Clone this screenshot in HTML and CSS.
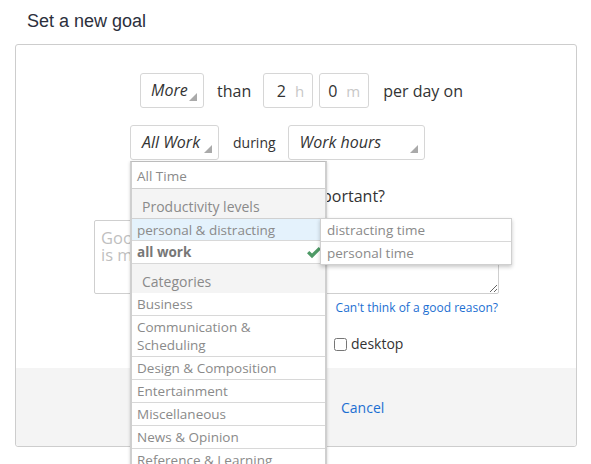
FILE: index.html
```html
<!DOCTYPE html>
<html>
<head>
<meta charset="utf-8">
<link rel="stylesheet" href="styles.css">
</head>
<body>
<h1 class="title">Set a new goal</h1>
<div class="card">
  <div class="card-body">
    <div class="row row-amount">
      <div class="select sel-more">More</div>
      <span class="word w-than">than</span>
      <div class="num"><span class="val">2</span><span class="unit">h</span></div>
      <div class="num num-m"><span class="val">0</span><span class="unit">m</span></div>
      <span class="word w-per">per day on</span>
    </div>
    <div class="row row-activity">
      <div class="select-wrap">
        <div class="select sel-work">All Work</div>
        <div class="dropdown">
          <div class="opt opt-first">All Time</div>
          <div class="group-label">Productivity levels</div>
          <div class="opt opt-hover">personal &amp; distracting</div>
          <div class="opt opt-bold">all work
            <svg class="check" width="14" height="12" viewBox="0 0 14 12"><path d="M0 6.2 L2.3 3.9 L5 6.6 L11.7 0 L14 2.3 L5 11.2 Z" fill="#4e9a66"/></svg>
          </div>
          <div class="group-label">Categories</div>
          <div class="opt">Business</div>
          <div class="opt opt-two">Communication &amp; Scheduling</div>
          <div class="opt">Design &amp; Composition</div>
          <div class="opt">Entertainment</div>
          <div class="opt">Miscellaneous</div>
          <div class="opt">News &amp; Opinion</div>
          <div class="opt">Reference &amp; Learning</div>
          <div class="submenu">
            <div class="sub-opt">distracting time</div>
            <div class="sub-opt">personal time</div>
          </div>
        </div>
      </div>
      <span class="word small w-during">during</span>
      <div class="select sel-hours">Work hours</div>
    </div>
    <p class="question">Why is this goal important?</p>
    <div class="reason-block">
      <textarea class="reason" placeholder="Good goals have a clear reason that&#10;is meaningful to you."></textarea>
      <div class="hint"><a href="#">Can't think of a good reason?</a></div>
    </div>
    <div class="devices">
      <label class="device"><input type="checkbox" class="cb"> desktop</label>
    </div>
  </div>
  <div class="card-footer">
    <a href="#" class="cancel">Cancel</a>
  </div>
</div>
</body>
</html>
```
FILE: styles.css
```css
html, body {
  margin: 0;
  padding: 0;
  height: 100%;
  overflow: hidden;
  background: #fff;
}
body {
  font-family: "Open Sans", "Noto Sans", sans-serif;
  color: #333;
}
.title {
  margin: 0;
  padding: 11px 0 0 27px;
  height: 33px;
  font: normal 18px/20px "Liberation Sans", Arial, sans-serif;
  color: #2c2f3c;
}
.card {
  margin-left: 15px;
  width: 560px;
  border: 1px solid #cdcdcd;
  border-radius: 3px;
}
.card-body {
  height: 323px;
  box-sizing: border-box;
  padding-top: 28px;
}
.row {
  display: flex;
  align-items: center;
}
.row-amount {
  padding-left: 124px;
}
.row-activity {
  margin-top: 17px;
  padding-left: 114px;
}
.select {
  position: relative;
  box-sizing: border-box;
  height: 35px;
  border: 1px solid #d6d6d6;
  border-radius: 3px;
  font-size: 16px;
  font-style: italic;
  line-height: 33px;
  padding-left: 10px;
  color: #333;
  background: #fff;
}
.select::after {
  content: "";
  position: absolute;
  right: 6px;
  bottom: 6px;
  width: 0;
  height: 0;
  border-left: 8px solid transparent;
  border-bottom: 8px solid #aaa;
}
.sel-more { width: 64px; }
.sel-work { width: 89px; padding-left: 11px; }
.sel-hours { width: 137px; padding-left: 11px; }
.word {
  font-size: 16px;
}
.small { font-size: 14px; }
.w-than { margin-left: 13px; }
.w-per { margin-left: 14px; }
.w-during { margin-left: 14px; margin-right: 12px; }
.num {
  box-sizing: border-box;
  width: 50px;
  height: 35px;
  margin-left: 12px;
  border: 1px solid #d6d6d6;
  border-radius: 3px;
  display: flex;
  justify-content: flex-end;
  align-items: center;
  padding-right: 8px;
  font-size: 16px;
}
.num-m { margin-left: 6px; }
.unit {
  margin-left: 9px;
  color: #c8c8c8;
  font-size: 15px;
}
.select-wrap {
  position: relative;
}
.dropdown {
  position: absolute;
  left: 0;
  top: 36px;
  width: 197px;
  box-sizing: border-box;
  background: #fff;
  border: 1px solid #bcbcbc;
  border-left-width: 2px;
  border-right-width: 2px;
  border-left-color: #cfcfcf;
  border-right-color: #cfcfcf;
  box-shadow: 0 1px 3px rgba(0,0,0,0.18);
  z-index: 10;
  font-size: 13.5px;
  color: #8a8a8a;
}
.opt {
  position: relative;
  box-sizing: border-box;
  height: 23px;
  line-height: 22px;
  padding: 0 5px;
  border-bottom: 1px solid #d8d8d8;
  white-space: nowrap;
}
.opt-first {
  height: 27px;
  line-height: 28px;
  border-bottom-color: #cfcfcf;
}
.opt-two {
  height: 41px;
  line-height: 18px;
  padding-top: 2px;
  white-space: normal;
  padding-right: 60px;
}
.opt-hover {
  background: #e4f2fc;
  border-top: 1px solid #d0d0d0;
}
.opt-bold {
  font-weight: bold;
  color: #777;
}
.check {
  position: absolute;
  right: 4px;
  top: 6px;
}
.group-label {
  box-sizing: border-box;
  height: 29px;
  padding: 8px 10px 0;
  line-height: 20px;
  background: #f4f4f4;
  font-size: 14px;
  color: #8a8a8a;
}
.submenu {
  position: absolute;
  left: 188px;
  top: 56px;
  width: 192px;
  box-sizing: border-box;
  background: #fff;
  border: 1px solid #d0d0d0;
  box-shadow: 0 2px 4px rgba(0,0,0,0.22);
}
.sub-opt {
  height: 23px;
  box-sizing: border-box;
  line-height: 22px;
  padding-left: 6px;
  border-bottom: 1px solid #d8d8d8;
}
.sub-opt:last-child { border-bottom: none; height: 22px; }
.question {
  margin: 25px 0 0;
  padding-right: 191px;
  text-align: right;
  font-size: 16px;
  line-height: 22px;
}
.reason-block {
  margin: 13px 0 0 78px;
  width: 405px;
}
.reason {
  display: block;
  box-sizing: border-box;
  width: 405px;
  height: 74px;
  margin: 0;
  border: 1px solid #cfcfcf;
  border-radius: 2px;
  padding: 8px 6px;
  font-family: "Open Sans", sans-serif;
  font-size: 16.5px;
  line-height: 17px;
}
.reason::placeholder {
  color: #bfbfbf;
}
.hint {
  margin-top: 6px;
  text-align: right;
  padding-right: 1px;
  line-height: 16px;
  font-size: 12px;
}
.hint a, .cancel {
  color: #1c6fd2;
  text-decoration: none;
}
.devices {
  margin-top: 18px;
  padding-left: 318px;
  line-height: 20px;
  font-size: 14px;
}
.device {
  display: inline-flex;
  align-items: center;
}
.cb {
  width: 13px;
  height: 13px;
  margin: 0 4px 0 0;
}
.card-footer {
  height: 78px;
  background: #f4f4f4;
  display: flex;
  align-items: center;
  padding-left: 325px;
  border-radius: 0 0 3px 3px;
}
.cancel {
  font-size: 14px;
}
```
